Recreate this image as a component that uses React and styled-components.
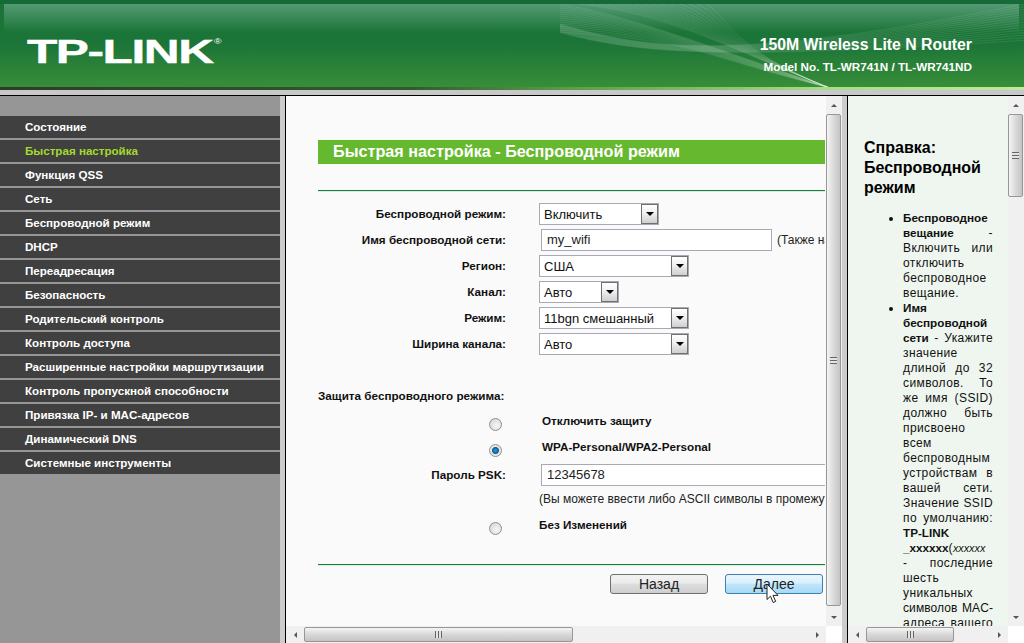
import React from "react"
import styled, { createGlobalStyle } from "styled-components"

const Global = createGlobalStyle`
  html, body { margin: 0; padding: 0; height: 100%; overflow: hidden; }
  body { font-family: "Liberation Sans", Arial, sans-serif; font-size: 11.7px; color: #000; }
  #root { height: 100%; }
`

const Page = styled.div`
  width: 1024px;
  height: 643px;
  display: flex;
  flex-direction: column;
  background: #c8c8c8;
  overflow: hidden;
`

/* header */
const Header = styled.header`
  position: relative;
  height: 90px;
  flex: none;
  display: flex;
  justify-content: space-between;
  box-sizing: border-box;
  padding: 0 52px 0 27px;
  background: linear-gradient(#1b7338 0, #1c7538 40px, #3a9038 87px);
  border-top: 4px solid #166a38;
  overflow: hidden;
  &::after {
    content: "";
    position: absolute;
    left: 0;
    right: 0;
    bottom: 0;
    height: 3px;
    background: linear-gradient(90deg, #2f3a2a 0, #2f5a30 40%, #5a9a48 55%, #a6dc88 80%, #c0e8a0 100%);
  }
`
const Sheen = styled.div`
  position: absolute;
  top: 0;
  left: 4px;
  right: 5px;
  height: 28px;
  background: linear-gradient(#549a74, #1c7538);
`
const Waves = styled.svg`
  position: absolute;
  top: 0;
  right: 0;
`
const Logo = styled.div`
  position: relative;
  margin-top: 31px;
  height: 34px;
  font-size: 34px;
  line-height: 33px;
  font-weight: 700;
  color: #fff;
  letter-spacing: -1px;
  -webkit-text-stroke: 0.4px #fff;
  transform: scaleX(1.46);
  transform-origin: left top;
  sup {
    font-size: 7px;
    line-height: 8px;
    font-weight: 400;
    vertical-align: 19px;
    letter-spacing: 0;
    margin-left: 1px;
    -webkit-text-stroke: 0;
  }
`
const Titles = styled.div`
  position: relative;
  text-align: right;
  color: #fff;
  font-weight: 700;
`
const Product = styled.div`
  margin-top: 32px;
  font-size: 15.8px;
  line-height: 18px;
`
const Model = styled.div`
  margin-top: 6px;
  font-size: 11.7px;
  line-height: 14px;
`

/* frames */
const Frames = styled.div`
  flex: 1;
  min-height: 0;
  margin-top: 5px;
  border-top: 1px solid #000;
  display: flex;
`
const Side = styled.nav`
  width: 280px;
  flex: none;
  box-sizing: border-box;
  padding-top: 20px;
  background: #969696;
`
const MenuItem = styled.div`
  height: 22px;
  margin-bottom: 2px;
  padding-left: 25px;
  background: #404040;
  font-size: 11.6px;
  font-weight: 700;
  line-height: 21px;
  color: ${p => (p.$active ? "#a4d92f" : "#fff")};
`
const FrameGap = styled.div`
  width: 5px;
  flex: none;
  background: #ccc;
  border-right: 1px solid #000;
`
const Pane = styled.div`
  flex: ${p => (p.$w ? `0 0 ${p.$w}px` : "1")};
  min-width: 0;
  display: grid;
  grid-template-columns: 1fr ${p => p.$bar}px;
  grid-template-rows: 1fr 17px;
  background: ${p => p.$bg};
`
const View = styled.div`
  overflow: hidden;
  min-width: 0;
  min-height: 0;
`

/* scrollbars */
const Track = styled.div`
  display: flex;
  flex-direction: ${p => (p.$h ? "row" : "column")};
  background: #f0f0f0;
  ${p => (p.$h ? "padding: 1px 0;" : "")}
`
const Arrow = styled.div`
  flex: none;
  width: ${p => (p.$h ? "18px" : "auto")};
  height: ${p => (p.$h ? "auto" : "18px")};
  display: flex;
  align-items: center;
  justify-content: center;
  &::before {
    content: "";
    border: 3.5px solid transparent;
    ${p => ({
      up: "border-bottom-color:#555;border-top-width:0;",
      down: "border-top-color:#555;border-bottom-width:0;",
      left: "border-right-color:#555;border-left-width:0;",
      right: "border-left-color:#555;border-right-width:0;"
    }[p.$dir])}
  }
`
const Thumb = styled.div`
  flex: none;
  box-sizing: border-box;
  display: flex;
  align-items: center;
  justify-content: center;
  border: 1px solid #979797;
  border-radius: 2px;
  ${p =>
    p.$h
      ? `width:${p.$size}px;background:linear-gradient(#f4f4f4,#d8d8d8 50%,#c4c4c4);`
      : `height:${p.$size}px;margin-right:1px;background:linear-gradient(90deg,#f4f4f4,#dadada 50%,#c4c4c4);`}
`
const Grip = styled.div`
  ${p =>
    p.$h
      ? "width:7px;height:7px;background:repeating-linear-gradient(90deg,#666 0 1px,#e4e4e4 1px 3px);"
      : "width:7px;height:7px;background:repeating-linear-gradient(#666 0 1px,#e4e4e4 1px 3px);"}
`
const TrackFill = styled.div`
  flex: 1;
`
const Corner = styled.div`
  background: #fff;
`

const VBar = ({ size }) => (
  <Track>
    <Arrow $dir="up" />
    <Thumb $size={size}><Grip /></Thumb>
    <TrackFill />
    <Arrow $dir="down" />
  </Track>
)
const HBar = ({ size }) => (
  <Track $h>
    <Arrow $h $dir="left" />
    <Thumb $h $size={size}><Grip $h /></Thumb>
    <TrackFill />
    <Arrow $h $dir="right" />
  </Track>
)

/* main form */
const Main = styled.main`
  width: 900px;
  padding: 44px 0 0 32px;
`
const Clip = styled.div`
  width: 507px;
  overflow: hidden;
`
const Banner = styled.h1`
  margin: 0;
  height: 24px;
  padding-left: 15px;
  background: #66b82e;
  color: #fff;
  font-size: 16.2px;
  line-height: 23px;
  font-weight: 700;
`
const Rule = styled.hr`
  margin: ${p => p.$m};
  height: 1px;
  border: 0;
  background: #12803f;
  box-shadow: 0 1px 0 #dcebe0;
`
const Form = styled.div`
  width: 800px;
  margin-top: ${p => p.$top || 0}px;
  display: grid;
  grid-template-columns: 188px 1fr;
  column-gap: 33px;
  grid-auto-rows: 26px;
  align-items: center;
`
const Label = styled.div`
  margin-bottom: 2px;
  font-weight: 700;
  text-align: right;
  white-space: nowrap;
  color: #111;
`
const Control = styled.div`
  display: flex;
  align-items: center;
  gap: 5px;
  white-space: nowrap;
`
const Select = styled.div`
  box-sizing: border-box;
  width: ${p => p.$w}px;
  height: 22px;
  display: flex;
  align-items: center;
  justify-content: space-between;
  background: #fff;
  border: 1px solid #a9a9b5;
  padding-left: 4px;
  font-size: 13px;
  color: #111;
`
const DropBtn = styled.span`
  box-sizing: border-box;
  width: 17px;
  height: 20px;
  display: flex;
  align-items: center;
  justify-content: center;
  border: 1px solid #707070;
  background: linear-gradient(#fff, #f0f0f0 45%, #cfcfcf);
  &::before {
    content: "";
    border: 4px solid transparent;
    border-top-color: #000;
    border-bottom-width: 0;
  }
`
const Field = styled.div`
  box-sizing: border-box;
  width: ${p => p.$w}px;
  height: 22px;
  margin-left: 2px;
  padding-left: 5px;
  background: #fff;
  border: 1px solid #a9a9b5;
  font-size: 13px;
  line-height: 20px;
  color: #222;
`
const Hint = styled.span`
  font-size: 12px;
  color: #222;
  white-space: nowrap;
`
const PskHint = styled(Hint)`
  grid-column: 2;
  align-self: start;
  margin-top: 4px;
`
const SectionTitle = styled.div`
  margin-top: 29px;
  height: 22px;
  line-height: 20px;
  font-weight: 700;
  color: #111;
`
const RadioRow = styled.div`
  height: 26px;
  display: grid;
  grid-template-columns: 188px 1fr;
  column-gap: ${p => p.$gap || 36}px;
  align-items: center;
  margin-top: ${p => p.$top || 0}px;
`
const Radio = styled.span`
  justify-self: end;
  margin-right: 4px;
  width: 13px;
  height: 13px;
  border-radius: 50%;
  box-sizing: border-box;
  border: 1px solid #8e8f8f;
  background: ${p =>
    p.$on
      ? "radial-gradient(circle, #2f9ad8 0, #0d5f95 3px, #e4e4e4 4px, #f2f2f2 100%)"
      : "radial-gradient(circle at 60% 60%, #f6f6f6, #d0d0d0)"};
  transform: translateY(1px);
`
const RadioText = styled.span`
  font-weight: 700;
  color: #111;
  white-space: nowrap;
  transform: translateY(-3px);
`
const Buttons = styled.div`
  display: flex;
  justify-content: flex-end;
  gap: 17px;
  padding: 9px 2px 24px 0;
`
const Btn = styled.div`
  position: relative;
  box-sizing: border-box;
  width: 98px;
  height: 20px;
  border-radius: 3px;
  text-align: center;
  font-size: 14px;
  line-height: 18px;
  color: #222;
  border: 1px solid ${p => (p.$hover ? "#3c7fb1" : "#707070")};
  background: ${p =>
    p.$hover
      ? "linear-gradient(#eaf6fd, #d9f0fc 45%, #bee6fd 50%, #a7d9f5)"
      : "linear-gradient(#f2f2f2, #ebebeb 45%, #dddddd 50%, #cfcfcf)"};
`
const Pointer = styled.svg`
  position: absolute;
  left: 40px;
  top: 8px;
`

/* help */
const Help = styled.aside`
  width: 160px;
  box-sizing: border-box;
  padding-top: 42px;
`
const HelpTitle = styled.h2`
  margin: 0 0 13px 16px;
  width: 130px;
  font-size: 16px;
  line-height: 20px;
  font-weight: 700;
`
const HelpList = styled.ul`
  margin: 0;
  padding: 0 15px 0 55px;
  line-height: 15px;
  font-size: 12px;
  letter-spacing: 0.4px;
  color: #111;
  text-align: justify;
  b {
    line-height: 1;
    letter-spacing: 0;
    font-size: 11.7px;
  }
`
const Tiny = styled.i`
  line-height: 1;
  font-size: 10.8px;
  letter-spacing: 0;
`
const Snug = styled.span`
  letter-spacing: 0.1px;
  white-space: nowrap;
`

const menu = [
  "Состояние", "Быстрая настройка", "Функция QSS", "Сеть", "Беспроводной режим",
  "DHCP", "Переадресация", "Безопасность", "Родительский контроль", "Контроль доступа",
  "Расширенные настройки маршрутизации", "Контроль пропускной способности",
  "Привязка IP- и MAC-адресов", "Динамический DNS", "Системные инструменты"
]

const wave = Array.from({ length: 15 }, (_, i) => i)

export default function App() {
  return (
    <Page>
      <Global />
      <Header>
        <Sheen />
        <Waves width="464" height="84" fill="none" stroke="#fff" strokeOpacity="0.13" strokeWidth="0.7">
          {wave.map(i => (
            <path key={`a${i}`} d={`M0 ${i * 2} C ${60 + i * 6} ${10 + i * 2}, 130 ${35 + i}, 270 84`} />
          ))}
          {wave.map(i => (
            <path key={`b${i}`} d={`M${20 + i * 9} 0 C ${110 + i * 4} 10, 170 45, 270 84`} />
          ))}
          {wave.map(i => (
            <path key={`c${i}`} d={`M0 ${20 + i * 0.6} C 90 ${48 + i * 0.4}, 190 ${56 - i * 0.2}, 464 ${i * 2.6}`} />
          ))}
        </Waves>
        <Logo>TP-LINK<sup>®</sup></Logo>
        <Titles>
          <Product>150M Wireless Lite N Router</Product>
          <Model>Model No. TL-WR741N / TL-WR741ND</Model>
        </Titles>
      </Header>
      <Frames>
        <Side>
          {menu.map((m, i) => (
            <MenuItem key={m} $active={i === 1}>{m}</MenuItem>
          ))}
        </Side>
        <FrameGap />
        <Pane $bg="#fafafa" $w={556} $bar={16}>
          <View>
            <Main>
              <Clip>
                <Banner>Быстрая настройка - Беспроводной режим</Banner>
                <Rule $m="26px 0 0" />
                <Form $top={10}>
                  <Label>Беспроводной режим:</Label>
                  <Control><Select $w={120}>Включить<DropBtn /></Select></Control>
                  <Label>Имя беспроводной сети:</Label>
                  <Control><Field $w={231}>my_wifi</Field><Hint>(Также называется SSID)</Hint></Control>
                  <Label>Регион:</Label>
                  <Control><Select $w={150}>США<DropBtn /></Select></Control>
                  <Label>Канал:</Label>
                  <Control><Select $w={80}>Авто<DropBtn /></Select></Control>
                  <Label>Режим:</Label>
                  <Control><Select $w={150}>11bgn смешанный<DropBtn /></Select></Control>
                  <Label>Ширина канала:</Label>
                  <Control><Select $w={150}>Авто<DropBtn /></Select></Control>
                </Form>
                <SectionTitle>Защита беспроводного режима:</SectionTitle>
                <RadioRow $top={2}>
                  <Radio />
                  <RadioText>Отключить защиту</RadioText>
                </RadioRow>
                <RadioRow>
                  <Radio $on />
                  <RadioText>WPA-Personal/WPA2-Personal</RadioText>
                </RadioRow>
                <Form>
                  <Label>Пароль PSK:</Label>
                  <Control><Field $w={400}>12345678</Field></Control>
                  <PskHint>(Вы можете ввести либо ASCII символы в промежутке от 8 до 63)</PskHint>
                </Form>
                <RadioRow $gap={33}>
                  <Radio />
                  <RadioText>Без Изменений</RadioText>
                </RadioRow>
                <Rule $m="24px 0 0" />
                <Buttons>
                  <Btn>Назад</Btn>
                  <Btn $hover>
                    Далее
                    <Pointer width="14" height="21" viewBox="0 0 14 21">
                      <path d="M1 1v15.5l3.5-3.3 2.6 6.3 2.6-1.1-2.7-6h5z" fill="#fff" stroke="#222" strokeWidth="1" />
                    </Pointer>
                  </Btn>
                </Buttons>
              </Clip>
            </Main>
          </View>
          <VBar size={492} />
          <HBar size={269} />
          <Corner />
        </Pane>
        <FrameGap />
        <Pane $bg="#eff6ef" $bar={16}>
          <View>
            <Help>
              <HelpTitle>Справка: Беспроводной режим</HelpTitle>
              <HelpList>
                <li><b>Беспроводное вещание</b> - Включить или отключить беспроводное вещание.</li>
                <li>
                  <b>Имя беспроводной сети</b> - Укажите значение длиной до 32 символов. То же имя (SSID)
                  должно быть присвоено всем беспроводным устройствам в вашей сети. Значение SSID по
                  умолчанию: <b>TP-LINK _xxxxxx</b>(<Tiny>xxxxxx</Tiny> - последние шесть уникальных{" "}
                  <Snug>символов MAC-</Snug> адреса вашего устройства.
                </li>
              </HelpList>
            </Help>
          </View>
          <VBar size={83} />
          <HBar size={88} />
          <Corner />
        </Pane>
      </Frames>
    </Page>
  )
}
